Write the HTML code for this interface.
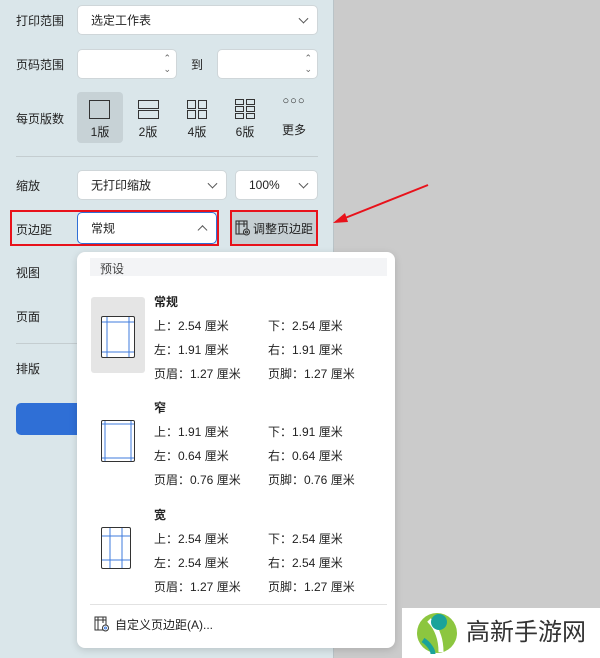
<!DOCTYPE html>
<html><head><meta charset="utf-8"><style>
html,body{margin:0;width:600px;height:658px;overflow:hidden}
body{background:#cbcbcb;font-family:"Liberation Sans","Noto Sans CJK SC",sans-serif;font-size:12px;color:#222;position:relative}
.a{position:absolute}
#left{left:0;top:0;width:333px;height:658px;background:#dae6ea;border-right:1px solid #b9c3c7}
.lbl{position:absolute;left:16px;font-size:12px;color:#222}
.box{position:absolute;background:#fff;border:1px solid #cfd6d9;border-radius:5px;box-sizing:border-box}
.chev{position:absolute;right:10px;top:50%;width:6px;height:6px;border-right:1.2px solid #555;border-bottom:1.2px solid #555;transform:translateY(-70%) rotate(45deg)}
.txt{position:absolute;left:13px;top:50%;transform:translateY(-50%)}
.tile{position:absolute;top:92px;width:46px;height:51px;text-align:center;font-size:12px}
.tile span{position:absolute;left:0;right:0;top:31px}
.pop{left:77px;top:252px;width:318px;height:396px;background:#fff;border-radius:8px;box-shadow:0 2px 8px rgba(0,0,0,.15)}
.r{position:absolute;font-size:12px;color:#222;white-space:nowrap}
</style></head><body>
<div id="left" class="a"></div>
<div class="lbl" style="top:12px">打印范围</div>
<div class="box" style="left:77px;top:5px;width:241px;height:30px"><div class="txt">选定工作表</div><div class="chev"></div></div>
<div class="lbl" style="top:56px">页码范围</div>
<div class="box" style="left:77px;top:49px;width:100px;height:30px"><div class="a" style="right:5px;top:3px;font-size:9px;color:#666;line-height:11px">&#8963;<br>&#8964;</div></div>
<div class="lbl" style="left:191px;top:56px">到</div>
<div class="box" style="left:217px;top:49px;width:101px;height:30px"><div class="a" style="right:5px;top:3px;font-size:9px;color:#666;line-height:11px">&#8963;<br>&#8964;</div></div>
<div class="lbl" style="top:110px">每页版数</div>
<div class="tile" style="left:77px;background:#c7d2d6;border-radius:4px"><div class="a" style="left:12px;top:8px;width:19px;height:17px;border:1.3px solid #333"></div><span>1版</span></div>
<div class="tile" style="left:125px"><div class="a" style="left:13px;top:8px;width:19px;height:7px;border:1.3px solid #333"></div><div class="a" style="left:13px;top:18px;width:19px;height:7px;border:1.3px solid #333"></div><span>2版</span></div>
<div class="tile" style="left:174px"><div class="a" style="left:13px;top:8px;width:7px;height:7px;border:1.3px solid #333"></div><div class="a" style="left:24px;top:8px;width:7px;height:7px;border:1.3px solid #333"></div><div class="a" style="left:13px;top:18px;width:7px;height:7px;border:1.3px solid #333"></div><div class="a" style="left:24px;top:18px;width:7px;height:7px;border:1.3px solid #333"></div><span>4版</span></div>
<div class="tile" style="left:222px"><div class="a" style="left:13px;top:7px;width:7px;height:4px;border:1.3px solid #333"></div><div class="a" style="left:24px;top:7px;width:7px;height:4px;border:1.3px solid #333"></div><div class="a" style="left:13px;top:14px;width:7px;height:4px;border:1.3px solid #333"></div><div class="a" style="left:24px;top:14px;width:7px;height:4px;border:1.3px solid #333"></div><div class="a" style="left:13px;top:21px;width:7px;height:4px;border:1.3px solid #333"></div><div class="a" style="left:24px;top:21px;width:7px;height:4px;border:1.3px solid #333"></div><span>6版</span></div>
<div class="tile" style="left:271px"><div class="a" style="left:0;right:0;top:3px;font-size:11px;letter-spacing:1px">○○○</div><span style="top:29px">更多</span></div>
<div class="a" style="left:16px;top:156px;width:302px;height:1px;background:#c4cdd0"></div>
<div class="lbl" style="top:177px">缩放</div>
<div class="box" style="left:77px;top:170px;width:150px;height:30px"><div class="txt">无打印缩放</div><div class="chev"></div></div>
<div class="box" style="left:235px;top:170px;width:83px;height:30px"><div class="txt">100%</div><div class="chev"></div></div>
<div class="a" style="left:10px;top:210px;width:205px;height:32px;border:2px solid #e8121b"></div>
<div class="lbl" style="top:221px">页边距</div>
<div class="box" style="left:77px;top:212px;width:140px;height:32px;border:1px solid #2f6fd6"><div class="txt">常规</div><div class="chev" style="transform:translateY(-20%) rotate(225deg)"></div></div>
<div class="a" style="left:230px;top:210px;width:84px;height:32px;border:2px solid #e8121b;background:#c6cfd3"><svg class="a" style="left:3px;top:8px" width="16" height="16" viewBox="0 0 16 16" fill="none" stroke="#333" stroke-width="1.1"><rect x="1" y="1" width="11" height="13"/><path d="M1 4h11M4 1v13M9 1v6"/><circle cx="11.5" cy="12" r="3" fill="#c6cfd3"/><circle cx="11.5" cy="12" r="1"/></svg><div class="a" style="left:21px;top:8px;font-size:12px;white-space:nowrap">调整页边距</div></div>
<svg class="a" style="left:330px;top:180px" width="105" height="50"><line x1="98" y1="5" x2="10" y2="40" stroke="#e8121b" stroke-width="2"/><polygon points="3,43 15,33 18,42" fill="#e8121b"/></svg>
<div class="lbl" style="top:264px">视图</div>
<div class="lbl" style="top:308px">页面</div>
<div class="a" style="left:16px;top:343px;width:62px;height:1px;background:#c4cdd0"></div>
<div class="lbl" style="top:360px">排版</div>
<div class="a" style="left:16px;top:403px;width:70px;height:32px;background:#2f6fd6;border-radius:5px"></div>
<div class="a pop">
<div class="a" style="left:13px;top:6px;width:297px;height:18px;background:#f3f4f6"><span class="a" style="left:10px;top:2px;color:#444">预设</span></div>
<div class="a" style="left:14px;top:45px;width:54px;height:76px;background:#e5e5e5;border-radius:3px"></div>
<svg class="a" style="left:24px;top:64px" width="35" height="45"><rect x=".5" y=".5" width="33" height="41" rx="1.5" fill="#fff" stroke="#333"/><path d="M6 1v40M28 1v40M1 6h32M1 36h32" stroke="#3f7bdc"/></svg>
<svg class="a" style="left:24px;top:168px" width="35" height="45"><rect x=".5" y=".5" width="33" height="41" rx="1.5" fill="#fff" stroke="#333"/><path d="M4 1v40M30 1v40M1 4h32M1 38h32" stroke="#3f7bdc"/></svg>
<svg class="a" style="left:24px;top:275px" width="35" height="45"><rect x=".5" y=".5" width="29" height="41" rx="1.5" fill="#fff" stroke="#333"/><path d="M9 1v40M21 1v40M1 9h28M1 33h28" stroke="#3f7bdc"/></svg>
<div class="r" style="left:77px;top:41px;font-weight:bold">常规</div>
<div class="r" style="left:77px;top:65px">上：2.54 厘米</div><div class="r" style="left:191px;top:65px">下：2.54 厘米</div>
<div class="r" style="left:77px;top:89px">左：1.91 厘米</div><div class="r" style="left:191px;top:89px">右：1.91 厘米</div>
<div class="r" style="left:77px;top:113px">页眉：1.27 厘米</div><div class="r" style="left:191px;top:113px">页脚：1.27 厘米</div>
<div class="r" style="left:77px;top:147px;font-weight:bold">窄</div>
<div class="r" style="left:77px;top:171px">上：1.91 厘米</div><div class="r" style="left:191px;top:171px">下：1.91 厘米</div>
<div class="r" style="left:77px;top:195px">左：0.64 厘米</div><div class="r" style="left:191px;top:195px">右：0.64 厘米</div>
<div class="r" style="left:77px;top:219px">页眉：0.76 厘米</div><div class="r" style="left:191px;top:219px">页脚：0.76 厘米</div>
<div class="r" style="left:77px;top:254px;font-weight:bold">宽</div>
<div class="r" style="left:77px;top:278px">上：2.54 厘米</div><div class="r" style="left:191px;top:278px">下：2.54 厘米</div>
<div class="r" style="left:77px;top:302px">左：2.54 厘米</div><div class="r" style="left:191px;top:302px">右：2.54 厘米</div>
<div class="r" style="left:77px;top:326px">页眉：1.27 厘米</div><div class="r" style="left:191px;top:326px">页脚：1.27 厘米</div>
<div class="a" style="left:13px;top:352px;width:297px;height:1px;background:#e2e2e2"></div>
<svg class="a" style="left:17px;top:364px" width="16" height="16" viewBox="0 0 16 16" fill="none" stroke="#333" stroke-width="1"><rect x="1" y="1" width="11" height="13"/><path d="M1 4h11M4 1v13M9 1v6"/><circle cx="11.5" cy="12" r="3" fill="#fff"/><circle cx="11.5" cy="12" r="1" stroke="#3f7bdc"/></svg>
<div class="r" style="left:38px;top:364px">自定义页边距(A)...</div>
</div>
<div class="a" style="left:402px;top:608px;width:198px;height:50px;background:#fff"></div>
<svg class="a" style="left:415px;top:610px" width="45" height="46"><circle cx="22" cy="23" r="20" fill="#8cc63f"/><path d="M14 10c8 8 12 18 12 32" stroke="#fff" stroke-width="5" fill="none"/><circle cx="24" cy="12" r="8" fill="#1aa39a"/><path d="M8 30c6 4 10 10 10 14" stroke="#1aa39a" stroke-width="5" fill="none"/></svg>
<div class="a" style="left:466px;top:619px;font-size:24px;line-height:28px;color:#333;white-space:nowrap">高新手游网</div>
</body></html>
